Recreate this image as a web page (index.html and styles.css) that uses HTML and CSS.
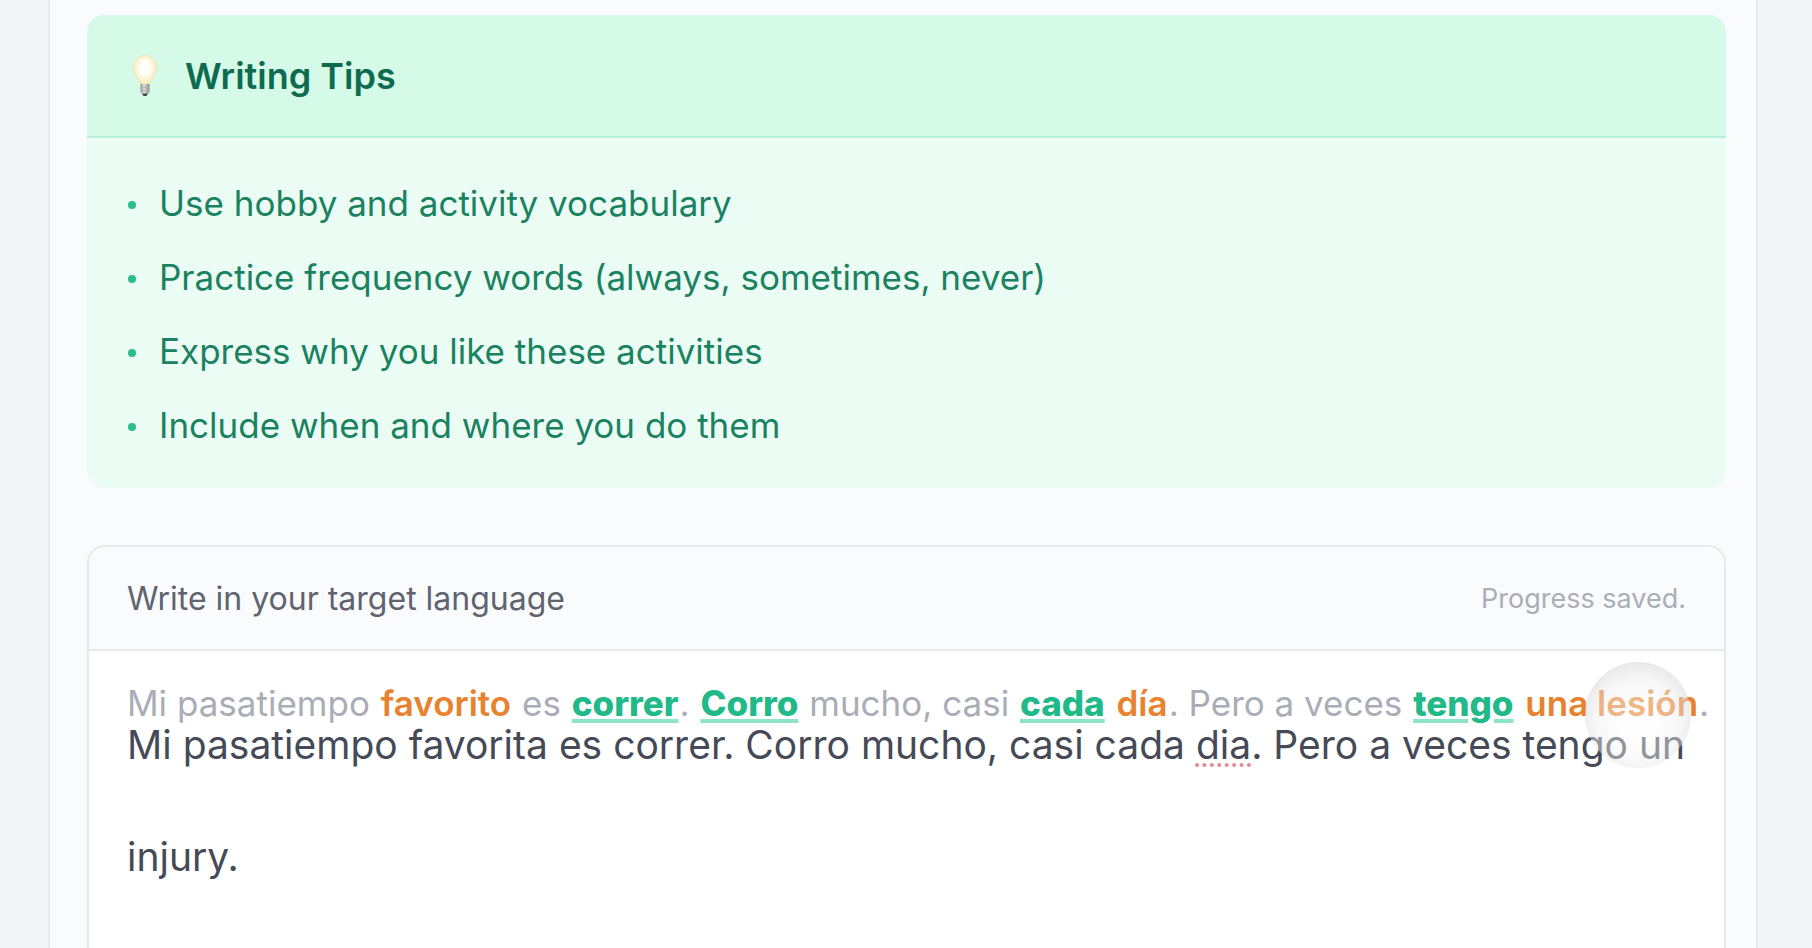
FILE: index.html
```html
<!DOCTYPE html>
<html lang="en">
<head>
    <meta charset="UTF-8">
    <meta name="viewport" content="width=device-width, initial-scale=1.0">
    <title>Writing Practice</title>
    <link rel="stylesheet" href="styles.css">
</head>
<body>
    <main class="panel">
        <section class="tips">
            <div class="tips-header">
                <svg class="bulb" viewBox="0 0 28 44" aria-hidden="true">
                    <defs>
                        <radialGradient id="glow" cx="50%" cy="42%" r="58%">
                            <stop offset="0" stop-color="#ffffff"/>
                            <stop offset="0.45" stop-color="#fffcf0"/>
                            <stop offset="1" stop-color="#f7e6ae"/>
                        </radialGradient>
                        <linearGradient id="metal">
                            <stop offset="0" stop-color="#8f9190"/>
                            <stop offset="0.4" stop-color="#e0e0e0"/>
                            <stop offset="1" stop-color="#858785"/>
                        </linearGradient>
                    </defs>
                    <path d="M14 1.5C7.500 1.5 2.500 6.600 2.500 13.500C2.500 21 8.500 22.500 9.500 31H18.500C19.500 22.500 25.500 21 25.500 13.500C25.500 6.600 20.500 1.5 14 1.5Z" fill="url(#glow)" stroke="#f6e3ae"/>
                    <path d="M9.500 30H18.500V38L16.500 40H11.500L9.500 38Z" fill="url(#metal)"/>
                    <path d="M9.500 34L18.500 33M9.500 37L18.500 36" stroke="#b0b2b1"/>
                    <path d="M11 39.500H17L15.500 42H12.500Z" fill="#444746"/>
                </svg>
                <h2>Writing Tips</h2>
            </div>
            <ul class="tips-list">
                <li>Use hobby and activity vocabulary</li>
                <li>Practice frequency words (always, sometimes, never)</li>
                <li>Express why you like these activities</li>
                <li>Include when and where you do them</li>
            </ul>
        </section>

        <section class="editor">
            <div class="editor-header">
                <label for="entry">Write in your target language</label>
                <span class="status">Progress saved.</span>
            </div>
            <div class="editor-body">
                <p class="correction">Mi pasatiempo <b class="fix">favorito</b> es <b class="good">correr</b>. <b class="good">Corro</b> mucho, casi <b class="good">cada</b> <b class="fix">día</b>. Pero a veces <b class="good">tengo</b> <b class="fix">una lesión</b>.</p>
                <!-- same text as the entry up to the misspelled word, carries the spelling mark only -->
                <div class="marks" aria-hidden="true">Mi pasatiempo favorita es correr. Corro mucho, casi cada <span class="misspelled">dia</span></div>
                <textarea id="entry" class="entry" rows="3" spellcheck="false">Mi pasatiempo favorita es correr. Corro mucho, casi cada dia. Pero a veces tengo un injury.</textarea>
                <div class="pointer"></div>
            </div>
        </section>
    </main>
</body>
</html>
```

FILE: styles.css
```css
* { box-sizing: border-box; }
body { margin: 0; height: 100vh; overflow: hidden; padding: 0 54px 0 48px; background: #f4f5f7; font-family: Inter, "Liberation Sans", sans-serif; }
h2, p, ul { margin: 0; padding: 0; }

.panel { min-height: 100vh; padding: 15px 30px 0 37px; background: #fafbfd; border: 2px solid #e8e9ec; border-width: 0 2px; }

.tips { background: #ebfcf4; border-radius: 18px; overflow: hidden; }
.tips-header { display: flex; align-items: center; gap: 26px; height: 123px; padding: 0 44px; background: #d5fae8; border-bottom: 2px solid #b8f0d8; }
.tips-header h2 { color: #0f6b4f; font-size: 36px; line-height: 44px; font-weight: 600; }
.bulb { width: 28px; height: 44px; }
.tips-list { list-style: none; padding: 35px 41px 19px; }
.tips-list li { display: flex; align-items: center; gap: 23px; margin-bottom: 14px; color: #1b8261; font-size: 35px; line-height: 60px; }
.tips-list li::before { content: ""; width: 8px; height: 8px; margin-top: 4px; border-radius: 50%; background: #2bbd8a; }

.editor { margin-top: 57px; background: #fff; border: 2px solid #e8e9ec; border-radius: 18px; overflow: hidden; }
.editor-header { display: flex; justify-content: space-between; align-items: center; height: 104px; padding: 0 38px; background: #fafbfd; border-bottom: 2px solid #e8e9ec; }
.editor-header label { color: #5f646e; font-size: 32px; }
.status { color: #aaaeb7; font-size: 27px; }

.editor-body { position: relative; }
.correction { position: absolute; top: 30px; left: 38px; color: #a9adb6; font-size: 35px; line-height: 44px; white-space: nowrap; }
.correction b { font-weight: 600; }
.correction .fix { padding: 0 1px; color: #e8822e; }
.correction .good { padding: 0 1px; color: #22b988; font-weight: 800; text-decoration: underline 4px #8fe3c5; text-underline-offset: 3px; }

.entry, .marks { display: block; width: 100%; padding: 38px 38px 0; border: 0; font: 39px/112px Inter, "Liberation Sans", sans-serif; white-space: pre-wrap; }
.entry { background: transparent; color: #454a56; resize: none; outline: none; overflow: hidden; }
.marks { position: absolute; top: 0; left: 0; color: transparent; }
.misspelled { text-decoration: underline dotted 4px #e58a8f; text-underline-offset: 4px; }

.pointer { position: absolute; top: 11px; right: 33px; width: 106px; height: 106px; border-radius: 50%; background: radial-gradient(circle at 50% 56%, rgba(252, 252, 252, 0.42) 25%, rgba(238, 238, 238, 0.45) 52%, rgba(208, 208, 208, 0.5) 76%); pointer-events: none; }
```
